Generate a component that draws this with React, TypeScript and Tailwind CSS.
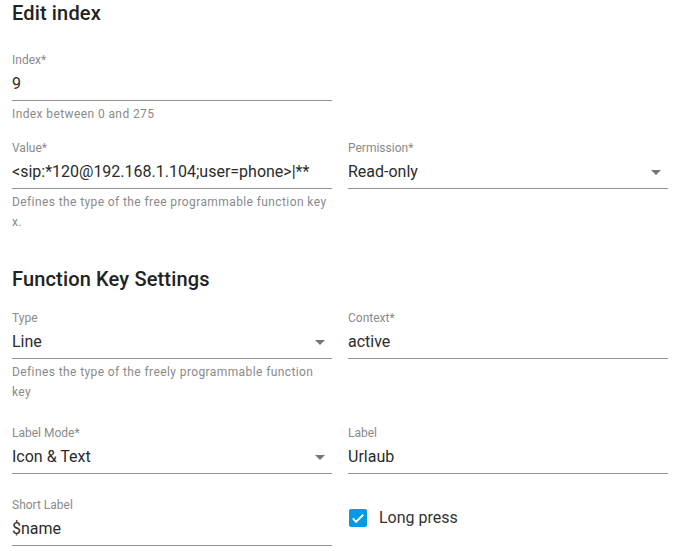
import React from "react";

const font = { fontFamily: "Roboto, 'Noto Sans', sans-serif" };

function Arrow() {
  return (
    <svg
      className="absolute right-0 top-[20px] w-6 h-6"
      viewBox="0 0 24 24"
      fill="rgba(0,0,0,0.54)"
    >
      <path d="M7 10l5 5 5-5z" />
    </svg>
  );
}

function Field({
  label,
  value,
  helper,
  select,
}: {
  label: string;
  value: string;
  helper?: string[];
  select?: boolean;
}) {
  return (
    <div className="flex flex-col">
      <div className="relative">
        <div className="text-[12px] leading-[16px] text-[#8a8a8a]">{label}</div>
        <div className="pt-[4px] pb-[5px] border-b border-[rgba(0,0,0,0.42)]">
          <div className="text-[16px] leading-[23px] text-[#2b2b2b] whitespace-nowrap">
            {value}
          </div>
        </div>
        {select && <Arrow />}
      </div>
      {helper && (
        <div className="mt-[3px] text-[12px] leading-[20px] tracking-[0.4px] text-[#8a8a8a]">
          {helper.map((h, i) => (
            <div key={i}>{h}</div>
          ))}
        </div>
      )}
    </div>
  );
}

export default function App() {
  return (
    <div className="w-[680px] h-[551px] bg-white px-3 overflow-hidden" style={font}>
      <h2 className="text-[20px] leading-[26px] font-medium tracking-[0.15px] text-[#222222]">Edit index</h2>
      <div className="mt-[26px] grid grid-cols-2 gap-x-4">
        <Field label="Index*" value="9" helper={["Index between 0 and 275"]} />
      </div>
      <div className="mt-4 grid grid-cols-2 gap-x-4">
        <Field
          label="Value*"
          value="<sip:*120@192.168.1.104;user=phone>|**"
          helper={["Defines the type of the free programmable function key", "x."]}
        />
        <Field label="Permission*" value="Read-only" select />
      </div>
      <h2 className="mt-[34px] text-[20px] leading-[26px] font-medium tracking-[0.15px] text-[#222222]">
        Function Key Settings
      </h2>
      <div className="mt-[18px] grid grid-cols-2 gap-x-4 gap-y-[23px] items-start">
        <Field
          label="Type"
          value="Line"
          select
          helper={["Defines the type of the freely programmable function", "key"]}
        />
        <Field label="Context*" value="active" />
        <Field label="Label Mode*" value="Icon & Text" select />
        <Field label="Label" value="Urlaub" />
        <Field label="Short Label" value="$name" />
        <label className="flex items-center -ml-[11px] self-start">
          <span className="w-[42px] h-[42px] flex items-center justify-center">
            <span className="w-[18px] h-[18px] rounded-[2px] bg-[#039be5] flex items-center justify-center">
              <svg viewBox="0 0 24 24" className="w-[18px] h-[18px]" fill="none" stroke="white" strokeWidth="2.6">
                <path d="M5 12.5l4.5 4.5L19 7.5" />
              </svg>
            </span>
          </span>
          <span className="text-[16px] leading-[24px] text-[#333333]">Long press</span>
        </label>
      </div>
    </div>
  );
}
